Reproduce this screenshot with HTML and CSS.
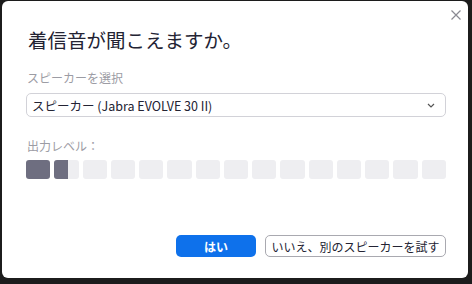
FILE: index.html
```html
<!DOCTYPE html>
<html lang="ja">
<head>
    <meta charset="UTF-8">
    <title>着信音が聞こえますか。</title>
    <link rel="stylesheet" href="styles.css">
</head>
<body>
    <div class="dialog">
        <button class="close" type="button" aria-label="閉じる">
            <svg width="10" height="10" viewBox="0 0 10 10">
                <path d="M0.5 0.5 L9.5 9.5 M9.5 0.5 L0.5 9.5" stroke="#8a8a92" stroke-width="1.2" fill="none"/>
            </svg>
        </button>

        <h1 class="title">着信音が聞こえますか。</h1>

        <div class="label label-first">スピーカーを選択</div>
        <div class="select">
            <span>スピーカー (Jabra EVOLVE 30 II)</span>
            <svg class="chevron" width="8" height="5" viewBox="0 0 8 5">
                <path d="M1 1 L4 4 L7 1" stroke="#555" stroke-width="1.2" fill="none"/>
            </svg>
        </div>

        <div class="label label-second">出力レベル：</div>
        <div class="levels">
            <div class="bar on"></div>
            <div class="bar"><div class="fill" style="width: 55%"></div></div>
            <div class="bar"></div>
            <div class="bar"></div>
            <div class="bar"></div>
            <div class="bar"></div>
            <div class="bar"></div>
            <div class="bar"></div>
            <div class="bar"></div>
            <div class="bar"></div>
            <div class="bar"></div>
            <div class="bar"></div>
            <div class="bar"></div>
            <div class="bar"></div>
            <div class="bar"></div>
        </div>

        <div class="actions">
            <button class="btn btn-primary" type="button">はい</button>
            <button class="btn btn-secondary" type="button">いいえ、別のスピーカーを試す</button>
        </div>
    </div>
</body>
</html>
```

FILE: styles.css
```css
* {
    box-sizing: border-box;
    margin: 0;
    padding: 0;
}

body {
    background-color: #1c1c1c;
    font-family: "Noto Sans CJK JP", "Noto Sans", sans-serif;
    color: #232333;
}

.dialog {
    position: relative;
    margin: 1px 4px 6px 2px;
    height: 277px;
    background-color: #fff;
    border-radius: 6px;
    padding: 27px 22px 0 24px;
}

.close {
    position: absolute;
    top: 9px;
    right: 7px;
    width: 10px;
    height: 10px;
    border: none;
    background: none;
    display: flex;
}

.title {
    font-size: 19.5px;
    font-weight: normal;
    line-height: 24px;
    padding-left: 2px;
    color: #232333;
}

.label {
    font-size: 12px;
    line-height: 16px;
    color: #9c9ca4;
    padding-left: 1px;
}

.label-first {
    margin-top: 18px;
}

.label-second {
    margin-top: 21px;
}

.select {
    margin-top: 7px;
    height: 24px;
    border: 1px solid #d2d2d8;
    border-radius: 5px;
    display: flex;
    align-items: center;
    justify-content: space-between;
    padding: 0 10px 0 5px;
    font-size: 12.5px;
    color: #232333;
}

.chevron {
    margin-top: 1px;
}

.levels {
    margin-top: 6px;
    display: flex;
    gap: 4px;
}

.bar {
    flex: 1;
    height: 19px;
    border-radius: 3px;
    background-color: #eeeef1;
    overflow: hidden;
}

.bar.on,
.bar .fill {
    background-color: #6e6e80;
}

.bar .fill {
    height: 100%;
}

.actions {
    margin-top: 56px;
    display: flex;
    justify-content: flex-end;
    gap: 9px;
}

.btn {
    height: 22px;
    border-radius: 5px;
    font-family: "Noto Sans CJK JP", "Noto Sans", sans-serif;
    font-size: 12px;
}

.btn-primary {
    width: 80px;
    border: none;
    background-color: #0e71eb;
    color: #fff;
    font-weight: bold;
}

.btn-secondary {
    width: 181px;
    border: 1px solid #a9a9b0;
    background-color: #fff;
    color: #232333;
}
```
